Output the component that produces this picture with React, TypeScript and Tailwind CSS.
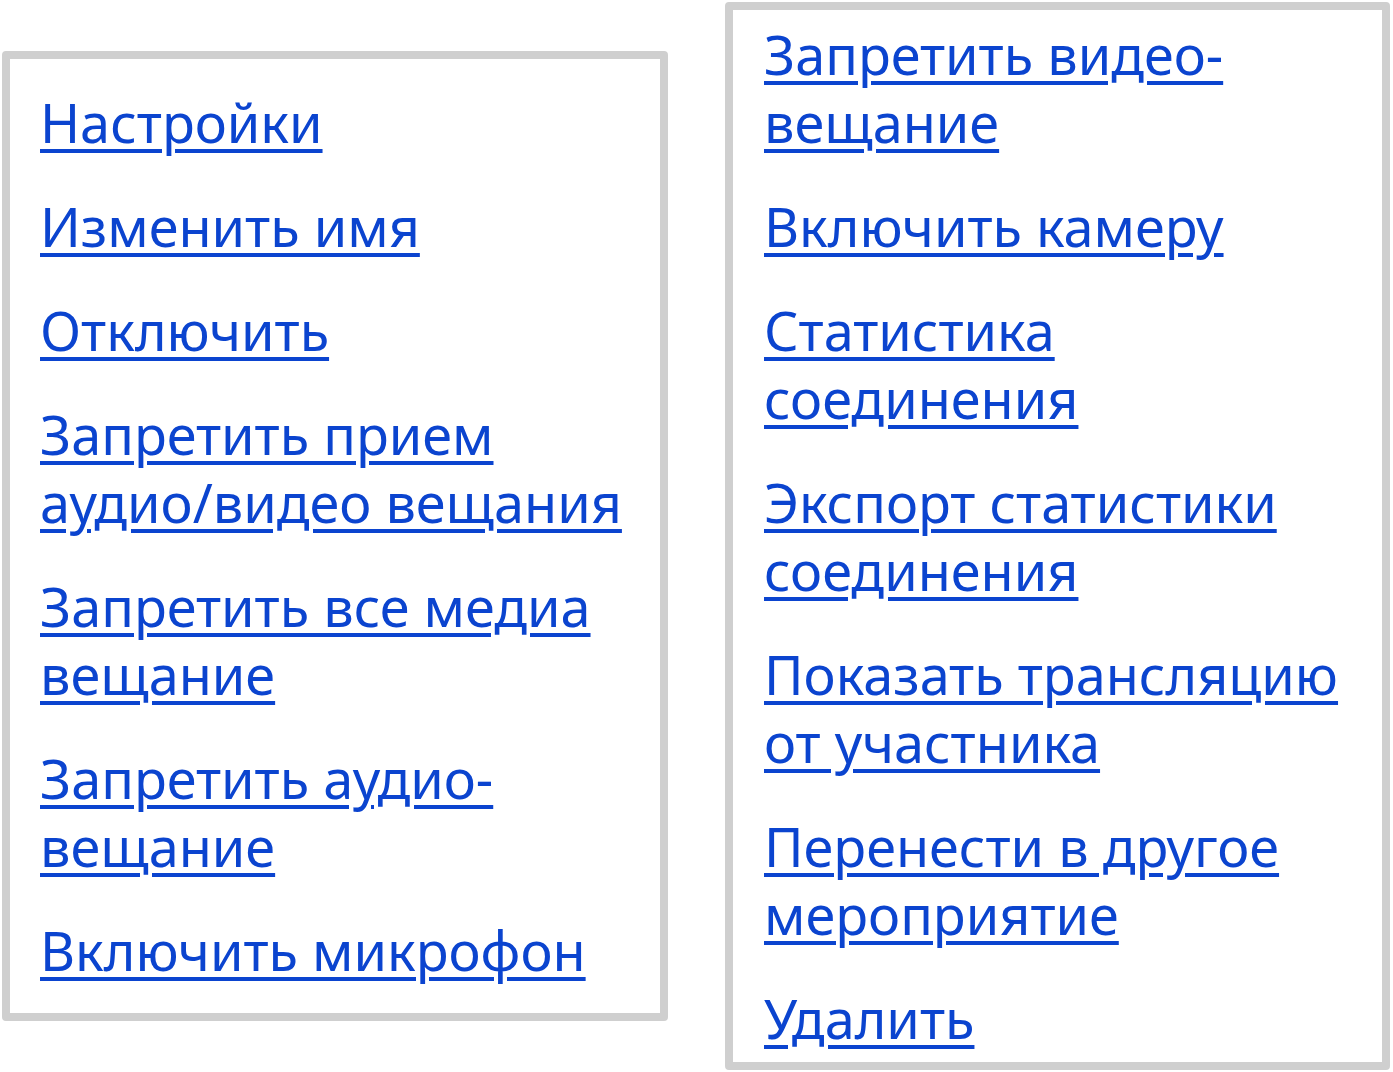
const leftItems = [
  'Настройки',
  'Изменить имя',
  'Отключить',
  'Запретить прием\nаудио/видео вещания',
  'Запретить все медиа\nвещание',
  'Запретить аудио-\nвещание',
  'Включить микрофон',
]

const rightItems = [
  'Запретить видео-\nвещание',
  'Включить камеру',
  'Статистика\nсоединения',
  'Экспорт статистики\nсоединения',
  'Показать трансляцию\nот участника',
  'Перенести в другое\nмероприятие',
  'Удалить',
]

function MenuLink({ label }: { label: string }) {
  return (
    <a
      href="#"
      className="block whitespace-pre-line text-[54px] leading-[68px] text-[#0b44cf] underline decoration-[4px] underline-offset-[6px]"
    >
      {label}
    </a>
  )
}

export default function App() {
  return (
    <div className="min-h-screen bg-white flex items-start" style={{ fontFamily: '"Noto Sans", sans-serif' }}>
      <div className="ml-[2px] mt-[51px] w-[666px] h-[970px] border-[8px] border-[#cfcfcf] rounded-[4px] bg-white pl-[30px] pt-[29px] flex flex-col gap-[36px]">
        {leftItems.map((item) => (
          <MenuLink key={item} label={item} />
        ))}
      </div>
      <div className="ml-[57px] mt-[2px] w-[665px] h-[1068px] border-[8px] border-[#cfcfcf] rounded-[4px] bg-white pl-[31px] pt-[10px] flex flex-col gap-[36px]">
        {rightItems.map((item) => (
          <MenuLink key={item} label={item} />
        ))}
      </div>
    </div>
  )
}
